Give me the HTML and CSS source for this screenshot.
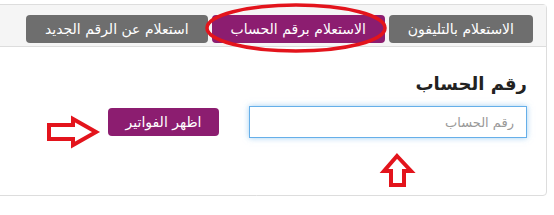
FILE: index.html
```html
<!DOCTYPE html>
<html lang="ar" dir="rtl">
<head>
    <meta charset="UTF-8">
    <meta name="viewport" content="width=device-width, initial-scale=1.0">
    <title>الاستعلام عن الفواتير</title>
    <link rel="stylesheet" href="styles.css">
</head>
<body>
    <div class="panel">
        <!-- Tabs for the inquiry type -->
        <div class="panel-heading">
            <div class="tab">الاستعلام بالتليفون</div>
            <div class="tab active">الاستعلام برقم الحساب</div>
            <div class="tab">استعلام عن الرقم الجديد</div>
        </div>

        <div class="panel-body">
            <h3>رقم الحساب</h3>
            <div class="form-row">
                <input type="text" class="account-input" placeholder="رقم الحساب" autofocus>
                <button class="show-button">اظهر الفواتير</button>
            </div>
        </div>
    </div>

    <!-- Red marks drawn over the screenshot -->
    <svg class="marks" width="554" height="215" viewBox="0 0 554 215">
        <ellipse cx="296" cy="28" rx="89" ry="23" fill="none" stroke="#e3141c" stroke-width="3.5"/>
        <polygon points="49,125 73,125 73,119 96,132 73,145 73,139 49,139" fill="#fff" stroke="#e3141c" stroke-width="4" stroke-linejoin="miter"/>
        <polygon points="397,156 411,171 404,171 404,185 391,185 391,171 384,171" fill="#fff" stroke="#e3141c" stroke-width="4" stroke-linejoin="miter"/>
    </svg>
</body>
</html>
```

FILE: styles.css
```css
body {
    font-family: "DejaVu Sans", sans-serif;
    background-color: #fff;
    margin: 0;
    padding: 0;
    position: relative;
    width: 554px;
    height: 215px;
    overflow: hidden;
}

.panel {
    margin: 4px 7px 0 -4px;
    border: 1px solid #ddd;
    border-radius: 4px;
    height: 192px;
    box-sizing: border-box;
}

.panel-heading {
    display: flex;
    gap: 4px;
    background-color: #f5f5f5;
    border-bottom: 1px solid #ddd;
    padding: 10px 13px 3px 0;
}

.tab {
    height: 28px;
    line-height: 28px;
    padding: 0 19px;
    border-radius: 4px;
    background-color: #6e6e6e;
    color: #fff;
    font-size: 14px;
}

.tab.active {
    background-color: #8c1d70;
}

.panel-body {
    padding: 26px 19px 0 0;
}

.panel-body h3 {
    margin: 0 0 12px 0;
    font-size: 18px;
    font-weight: bold;
    color: #222;
}

.form-row {
    display: flex;
    align-items: center;
    gap: 30px;
}

.account-input {
    width: 278px;
    height: 32px;
    box-sizing: border-box;
    border: 1px solid #66afe9;
    box-shadow: 0 0 6px rgba(102, 175, 233, 0.6);
    padding: 0 12px;
    font-family: inherit;
    font-size: 13px;
    outline: none;
}

.account-input::placeholder {
    color: #999;
}

.show-button {
    width: 111px;
    height: 28px;
    border: none;
    border-radius: 4px;
    background-color: #8c1d70;
    color: #fff;
    font-family: inherit;
    font-size: 14px;
    cursor: pointer;
}

.marks {
    position: absolute;
    top: 0;
    left: 0;
    pointer-events: none;
}
```
